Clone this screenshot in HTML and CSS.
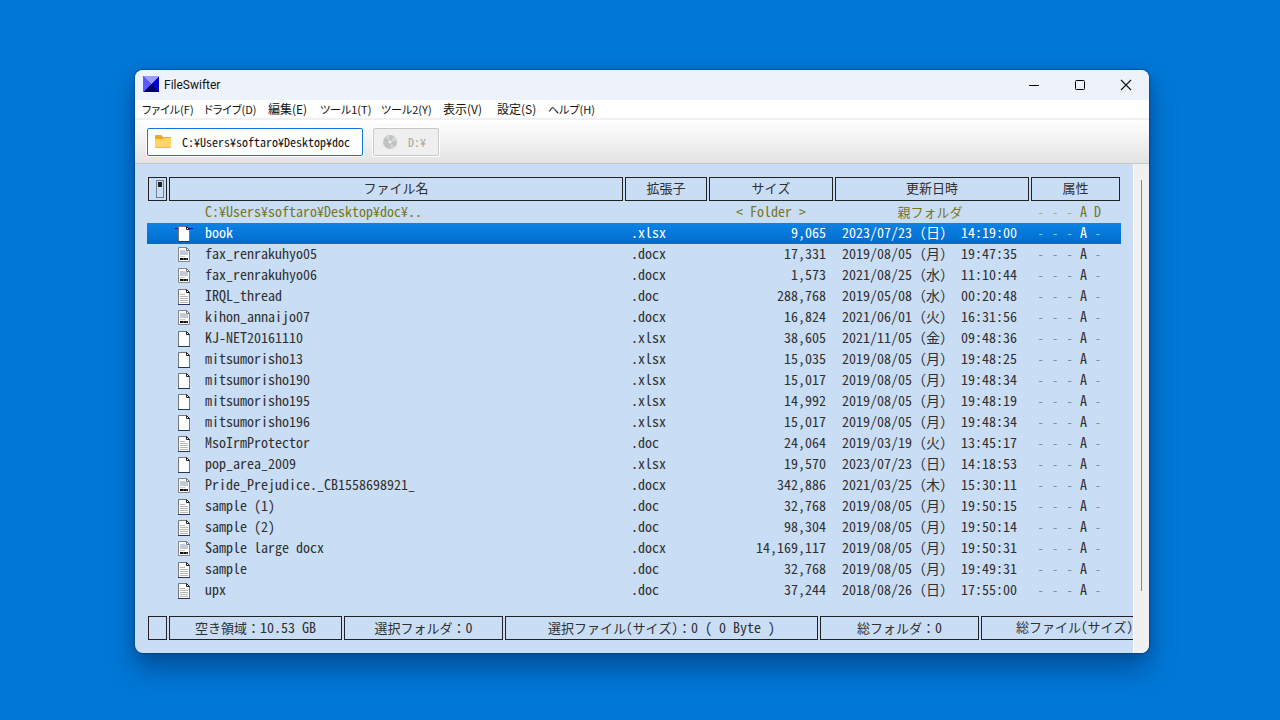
FILE: index.html
```html
<!DOCTYPE html>
<html lang="ja">
<head>
<meta charset="utf-8">
<title>FileSwifter</title>
<link rel="stylesheet" href="styles.css">
</head>
<body>
<svg class="defs" aria-hidden="true">
  <symbol id="blank" viewBox="0 0 18 16">
    <path d="M3.500.5h8l3 3v12h-11z" fill="#fdfdfd" stroke="#777"/>
    <path d="M3 15.500h12" stroke="#223a55"/>
    <path d="M11.500.5v3h3z" fill="#fff" stroke="#222"/>
  </symbol>
  <symbol id="doc" viewBox="0 0 18 16">
    <path d="M3.500.5h8l3 3v12h-11z" fill="#fdfdfd" stroke="#777"/>
    <path d="M3 15.500h12" stroke="#303060"/>
    <path d="M11.500.5v3h3z" fill="#fff" stroke="#222"/>
    <path d="M5 5.500h5M5 7.500h8M5 9.500h8M5 11.500h8M5 13.500h8" stroke="#b8b8b8"/>
  </symbol>
  <symbol id="docx" viewBox="0 0 18 16">
    <path d="M3.500.5h8l3 3v11h-11z" fill="#fdfdfd" stroke="#85858c"/>
    <path d="M11.500.5v3h3z" fill="#fff" stroke="#777"/>
    <path d="M5 3h5v1h3v4H5z" fill="#c3c9d6"/>
    <path d="M5 9.500h5" stroke="#ccc"/>
    <path d="M5 12h8" stroke="#111" stroke-width="2"/>
    <path d="M8 12h1M11 12h1" stroke="#555" stroke-width="2"/>
  </symbol>
</svg>
<main class="window">
  <header class="titlebar">
    <svg class="logo" width="16" height="16" viewBox="0 0 16 16" shape-rendering="crispEdges"><path d="M0 0h16v16H0z" fill="#0000a0"/><path d="M0 0h16L8 8z" fill="#9c9cff"/><path d="M0 0l8 8-8 8z" fill="#5a5aff"/><path d="M16 0v16L8 8z" fill="#0000c8"/><path d="M0 16h16L8 8z" fill="#000068"/></svg>
    <h1 class="title">FileSwifter</h1>
    <div class="controls">
      <button class="control" type="button" aria-label="最小化"><svg width="12" height="12"><path d="M1 6.500h10" stroke="#000"/></svg></button>
      <button class="control" type="button" aria-label="最大化"><svg width="12" height="12"><rect x="1.500" y="1.500" width="9" height="9" rx="1" fill="none" stroke="#000"/></svg></button>
      <button class="control" type="button" aria-label="閉じる"><svg width="12" height="12"><path d="M1 1l10 10M11 1L1 11" stroke="#111" stroke-width="1.100"/></svg></button>
    </div>
  </header>
  <nav class="menubar">
    <button class="kana" type="button">ファイル(F)</button><button class="kana" type="button">ドライブ(D)</button><button type="button">編集(E)</button><button class="kana" type="button">ツール1(T)</button><button class="kana" type="button">ツール2(Y)</button><button type="button">表示(V)</button><button type="button">設定(S)</button><button class="kana" type="button">ヘルプ(H)</button>
  </nav>
  <div class="toolbar">
    <button class="tab active" type="button"><svg width="16" height="14" viewBox="0 0 16 14"><path d="M0 1q0-1 1-1h5l2 2h7q1 0 1 1v9H0z" fill="#e8a91c"/><path d="M0 4h7l2-1h7v9q0 1-1 1H1q-1 0-1-1z" fill="#ffd567"/><path d="M0 12q0 1 1 1h14q1 0 1-1z" fill="#eeb944"/></svg>C:¥Users¥softaro¥Desktop¥doc</button>
    <button class="tab idle" type="button"><svg width="14" height="14" viewBox="0 0 14 14"><circle cx="7" cy="7" r="7" fill="#c0c2c3"/><path d="M7 7L2 2a7 7 0 0 1 4-2zM7 7l5 5a7 7 0 0 1-4 2z" fill="#d2d4d4"/><path d="M7 7l4-6a7 7 0 0 1 3 5z" fill="#d4d7d8"/><circle cx="7" cy="7" r="2" fill="#eee" stroke="#aaa" stroke-width=".5"/></svg>D:¥</button>
  </div>
  <div class="body">
    <div class="content">
      <table class="files">
        <colgroup><col class="c-mark"><col><col class="c-ext"><col class="c-size"><col class="c-date"><col class="c-attr"></colgroup>
        <thead><tr>
          <th><span class="box mark"><svg width="8" height="18"><rect x=".5" y=".5" width="7" height="17" fill="none" stroke="#708092"/><path d="M2 2h4v5H2z" fill="#222"/></svg></span></th>
          <th><span class="box">ファイル名</span></th><th><span class="box">拡張子</span></th><th><span class="box">サイズ</span></th><th><span class="box">更新日時</span></th><th><span class="box">属性</span></th>
        </tr></thead>
        <tbody>
        <tr class="parent"><td></td><td class="path">C:¥Users¥softaro¥Desktop¥doc¥..</td><td></td><td class="folder">&lt; Folder &gt;</td><td class="up">親フォルダ</td><td><i>- - -</i> A D</td></tr>
        <tr class="selected"><td></td><td><svg><path d="M0 2.500h18" stroke="#0018c8"/><use href="#blank"/></svg>book</td><td>.xlsx</td><td>9,065</td><td>2023/07/23（日） 14:19:00</td><td><i>- - -</i> A <i>-</i></td></tr>
        <tr><td></td><td><svg><use href="#docx"/></svg>fax_renrakuhyo05</td><td>.docx</td><td>17,331</td><td>2019/08/05（月） 19:47:35</td><td><i>- - -</i> A <i>-</i></td></tr>
        <tr><td></td><td><svg><use href="#docx"/></svg>fax_renrakuhyo06</td><td>.docx</td><td>1,573</td><td>2021/08/25（水） 11:10:44</td><td><i>- - -</i> A <i>-</i></td></tr>
        <tr><td></td><td><svg><use href="#doc"/></svg>IRQL_thread</td><td>.doc</td><td>288,768</td><td>2019/05/08（水） 00:20:48</td><td><i>- - -</i> A <i>-</i></td></tr>
        <tr><td></td><td><svg><use href="#docx"/></svg>kihon_annaijo07</td><td>.docx</td><td>16,824</td><td>2021/06/01（火） 16:31:56</td><td><i>- - -</i> A <i>-</i></td></tr>
        <tr><td></td><td><svg><use href="#blank"/></svg>KJ-NET20161110</td><td>.xlsx</td><td>38,605</td><td>2021/11/05（金） 09:48:36</td><td><i>- - -</i> A <i>-</i></td></tr>
        <tr><td></td><td><svg><use href="#blank"/></svg>mitsumorisho13</td><td>.xlsx</td><td>15,035</td><td>2019/08/05（月） 19:48:25</td><td><i>- - -</i> A <i>-</i></td></tr>
        <tr><td></td><td><svg><use href="#blank"/></svg>mitsumorisho190</td><td>.xlsx</td><td>15,017</td><td>2019/08/05（月） 19:48:34</td><td><i>- - -</i> A <i>-</i></td></tr>
        <tr><td></td><td><svg><use href="#blank"/></svg>mitsumorisho195</td><td>.xlsx</td><td>14,992</td><td>2019/08/05（月） 19:48:19</td><td><i>- - -</i> A <i>-</i></td></tr>
        <tr><td></td><td><svg><use href="#blank"/></svg>mitsumorisho196</td><td>.xlsx</td><td>15,017</td><td>2019/08/05（月） 19:48:34</td><td><i>- - -</i> A <i>-</i></td></tr>
        <tr><td></td><td><svg><use href="#doc"/></svg>MsoIrmProtector</td><td>.doc</td><td>24,064</td><td>2019/03/19（火） 13:45:17</td><td><i>- - -</i> A <i>-</i></td></tr>
        <tr><td></td><td><svg><use href="#blank"/></svg>pop_area_2009</td><td>.xlsx</td><td>19,570</td><td>2023/07/23（日） 14:18:53</td><td><i>- - -</i> A <i>-</i></td></tr>
        <tr><td></td><td><svg><use href="#docx"/></svg>Pride_Prejudice._CB1558698921_</td><td>.docx</td><td>342,886</td><td>2021/03/25（木） 15:30:11</td><td><i>- - -</i> A <i>-</i></td></tr>
        <tr><td></td><td><svg><use href="#doc"/></svg>sample (1)</td><td>.doc</td><td>32,768</td><td>2019/08/05（月） 19:50:15</td><td><i>- - -</i> A <i>-</i></td></tr>
        <tr><td></td><td><svg><use href="#doc"/></svg>sample (2)</td><td>.doc</td><td>98,304</td><td>2019/08/05（月） 19:50:14</td><td><i>- - -</i> A <i>-</i></td></tr>
        <tr><td></td><td><svg><use href="#docx"/></svg>Sample large docx</td><td>.docx</td><td>14,169,117</td><td>2019/08/05（月） 19:50:31</td><td><i>- - -</i> A <i>-</i></td></tr>
        <tr><td></td><td><svg><use href="#doc"/></svg>sample</td><td>.doc</td><td>32,768</td><td>2019/08/05（月） 19:49:31</td><td><i>- - -</i> A <i>-</i></td></tr>
        <tr><td></td><td><svg><use href="#doc"/></svg>upx</td><td>.doc</td><td>37,244</td><td>2018/08/26（日） 17:55:00</td><td><i>- - -</i> A <i>-</i></td></tr>
        </tbody>
      </table>
      <footer class="status">
        <span class="box s-mark"></span><span class="box s-free">空き領域：<span class="num">10.53 GB</span></span><span class="box s-folder">選択フォルダ：<span class="num">0</span></span><span class="box s-file">選択ファイル(サイズ)：<span class="num">0 ( 0 Byte )</span></span><span class="box s-folder">総フォルダ：<span class="num">0</span></span><span class="box s-file s-total">総ファイル(サイズ)</span>
      </footer>
    </div>
    <div class="scrollbar"><span class="thumb"></span></div>
  </div>
</main>
</body>
</html>
```

FILE: styles.css
```css
* { box-sizing: border-box; }
body {
  margin: 0;
  min-height: 100vh;
  padding: 70px 131px 64px 135px;
  background: #0078d7;
  color: #303030;
  font: 14px/21px "Noto Sans Mono CJK JP", "Liberation Mono", "Noto Sans CJK JP", monospace;
}
button { margin: 0; padding: 0; border: 0; background: none; color: inherit; font: inherit; white-space: nowrap; }
.defs { display: none; }
.window {
  border-radius: 8px;
  overflow: hidden;
  background: #c9ddf5;
  box-shadow: 0 0 1px 1px rgba(0, 50, 110, .4), 0 16px 28px rgba(0, 25, 70, .4), 0 2px 12px rgba(0, 30, 80, .2);
}
.titlebar { display: flex; align-items: center; height: 30px; padding-left: 8px; background: #eef3fb; }
.logo { margin-bottom: 2px; }
.title { margin: 0 0 0 5px; color: #111; font: 12px/16px Roboto, "Noto Sans", sans-serif; }
.controls { display: flex; margin-left: auto; }
.control { display: flex; align-items: center; justify-content: center; width: 46px; height: 28px; }
.menubar {
  display: grid;
  grid-template-columns: 62px 64px 52px 61px 62px 54px 51px auto;
  justify-content: start;
  height: 20px;
  padding-left: 7px;
  border-bottom: 2px solid #f0f0f0;
  background: #fff;
  color: #111;
  font: 12px/18px "Noto Sans CJK JP", sans-serif;
  font-feature-settings: "palt";
}
.menubar button { text-align: left; }
.menubar .kana { font-size: 11px; }
.toolbar {
  display: flex;
  gap: 10px;
  padding: 8px 12px 7px;
  border-bottom: 1px solid #c5c9c9;
  background: linear-gradient(#fff, #e3e3e3);
}
.tab { display: flex; align-items: center; height: 28px; padding-bottom: 1px; border: 1px solid #0f78e0; border-radius: 2px; background: #fff; color: #111; font-size: 12px; box-shadow: 0 0 0 1px #fff; }
.active { width: 216px; padding-left: 7px; gap: 11px; }
.idle { width: 66px; padding-left: 9px; gap: 11px; border-color: #c8c8c8; background: #efefef; color: #aaa79f; }
.body { display: flex; }
.content { flex: 1; min-width: 0; padding: 13px 0 13px 12px; overflow: hidden; }
.files { width: calc(100% - 12px); table-layout: fixed; border-collapse: separate; border-spacing: 0; }
.c-mark { width: 21px; }
.c-ext { width: 84px; }
.c-size { width: 126px; }
.c-date { width: 196px; }
.c-attr { width: 91px; }
th { padding: 0 1px 1px; font-weight: 400; }
.box { display: block; height: 24px; border: 1px solid #222; font-size: 13px; line-height: 20px; text-align: center; white-space: nowrap; }
.mark { display: flex; align-items: center; justify-content: flex-end; padding-right: 2px; }
.num { font-size: 14px; }
td { height: 21px; padding: 0 0 0 7px; line-height: 19px; vertical-align: top; white-space: pre; }
td:nth-child(4) { padding: 0 8px 0 0; text-align: right; }
td:nth-child(5) { padding-left: 8px; }
td svg { float: left; width: 18px; height: 16px; margin: 3px 12px 0 0; }
td i { color: #808c99; font: 12px/16px "DejaVu Sans Mono", monospace; }
.files .path { padding-left: 37px; }
.files .folder { padding-right: 28px; }
.files .up { padding: 0 4px 0 0; text-align: center; font-size: 13px; }
.parent { color: #77771c; }
.parent i { color: #a5a68e; }
.selected { background: linear-gradient(#0c83e6, #006ccc); color: #fff; }
.selected i { color: #8cc4f2; }
.status { display: flex; gap: 2px; margin-top: 15px; padding-left: 1px; }
.status .box { flex: none; }
.s-mark { width: 19px; }
.s-free { width: 173px; }
.s-folder { width: 159px; }
.s-file { width: 313px; }
.status .s-total { padding-left: 34px; text-align: left; }
.scrollbar { display: flex; justify-content: center; width: 16px; padding: 16px 0 62px; border-left: 1px solid #fff; background: #f0f0f0; }
.thumb { width: 1px; background: #858585; }
```
